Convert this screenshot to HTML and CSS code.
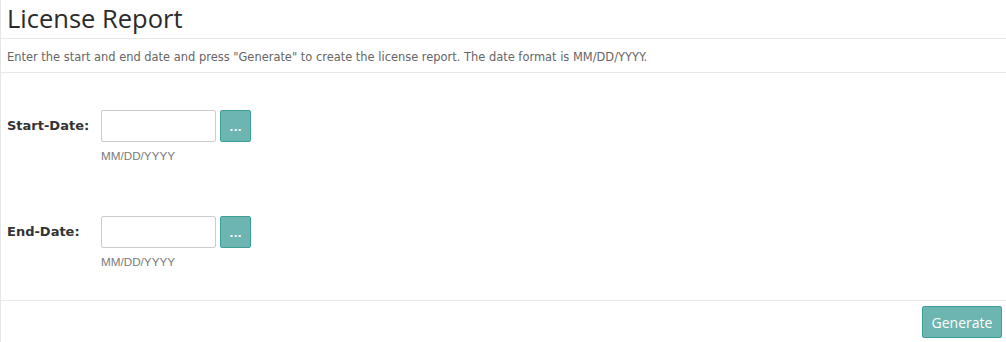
FILE: index.html
```html
<!DOCTYPE html>
<html>
<head>
<meta charset="utf-8">
<link rel="stylesheet" href="styles.css">
</head>
<body>
<div class="page">
  <div class="header"><h1 class="title">License Report</h1></div>
  <div class="desc">Enter the start and end date and press "Generate" to create the license report. The date format is MM/DD/YYYY.</div>
  <div class="form">
    <div class="row">
      <label class="label">Start-Date:</label>
      <div class="field">
        <div class="controls">
          <input class="date-input" type="text">
          <button class="pick">...</button>
        </div>
        <div class="hint">MM/DD/YYYY</div>
      </div>
    </div>
    <div class="row">
      <label class="label">End-Date:</label>
      <div class="field">
        <div class="controls">
          <input class="date-input" type="text">
          <button class="pick">...</button>
        </div>
        <div class="hint">MM/DD/YYYY</div>
      </div>
    </div>
  </div>
  <div class="footer"><button class="generate">Generate</button></div>
</div>
</body>
</html>
```
FILE: styles.css
```css
html, body {
  margin: 0;
  padding: 0;
  background: #fff;
}
.page {
  width: 1006px;
  height: 342px;
  box-sizing: border-box;
  border-left: 1px solid #e6e6e6;
  font-family: "DejaVu Sans", Verdana, sans-serif;
  color: #333;
  overflow: hidden;
}
.header {
  height: 38px;
  border-bottom: 1px solid #e8e8e8;
  box-sizing: content-box;
}
.title {
  margin: 0;
  padding: 2px 0 0 6px;
  font-family: "Open Sans", "Noto Sans", sans-serif;
  font-weight: 400;
  font-size: 25.5px;
  line-height: 32px;
  color: #2b2b2b;
}
.desc {
  height: 33px;
  border-bottom: 1px solid #e8e8e8;
  padding-left: 6px;
  font-size: 11.45px;
  line-height: 36px;
  color: #666;
}
.form {
  height: 227px;
  box-sizing: border-box;
  padding-top: 37px;
  display: flex;
  flex-direction: column;
  gap: 53px;
}
.row {
  display: flex;
  align-items: flex-start;
}
.label {
  width: 94px;
  padding-left: 6px;
  font-weight: bold;
  font-size: 13px;
  line-height: 32px;
  color: #333;
}
.controls {
  display: flex;
  gap: 4px;
}
.date-input {
  width: 115px;
  height: 32px;
  box-sizing: border-box;
  border: 1px solid #ccc;
  border-radius: 2px;
  margin: 0;
  padding: 0 6px;
}
.pick {
  width: 31px;
  height: 32px;
  box-sizing: border-box;
  border: 1px solid #3aa098;
  border-radius: 2px;
  background: #6db5b0;
  color: #fff;
  font-family: "DejaVu Sans", sans-serif;
  font-size: 11px;
  font-weight: bold;
  line-height: 30px;
  padding: 2px 0 0 0;
  margin: 0;
}
.hint {
  margin-top: 7px;
  font-family: "Liberation Sans", Arial, sans-serif;
  font-size: 11.7px;
  line-height: 14px;
  color: #7a7a7a;
}
.footer {
  border-top: 1px solid #e8e8e8;
  display: flex;
  justify-content: flex-end;
  padding: 5px 4px 0 0;
}
.generate {
  width: 80px;
  height: 32px;
  box-sizing: border-box;
  border: 1px solid #3aa098;
  border-radius: 2px;
  background: #6db5b0;
  color: #fff;
  font-family: "Open Sans", "Noto Sans", sans-serif;
  font-size: 14px;
  padding: 0;
  margin: 0;
}
```
